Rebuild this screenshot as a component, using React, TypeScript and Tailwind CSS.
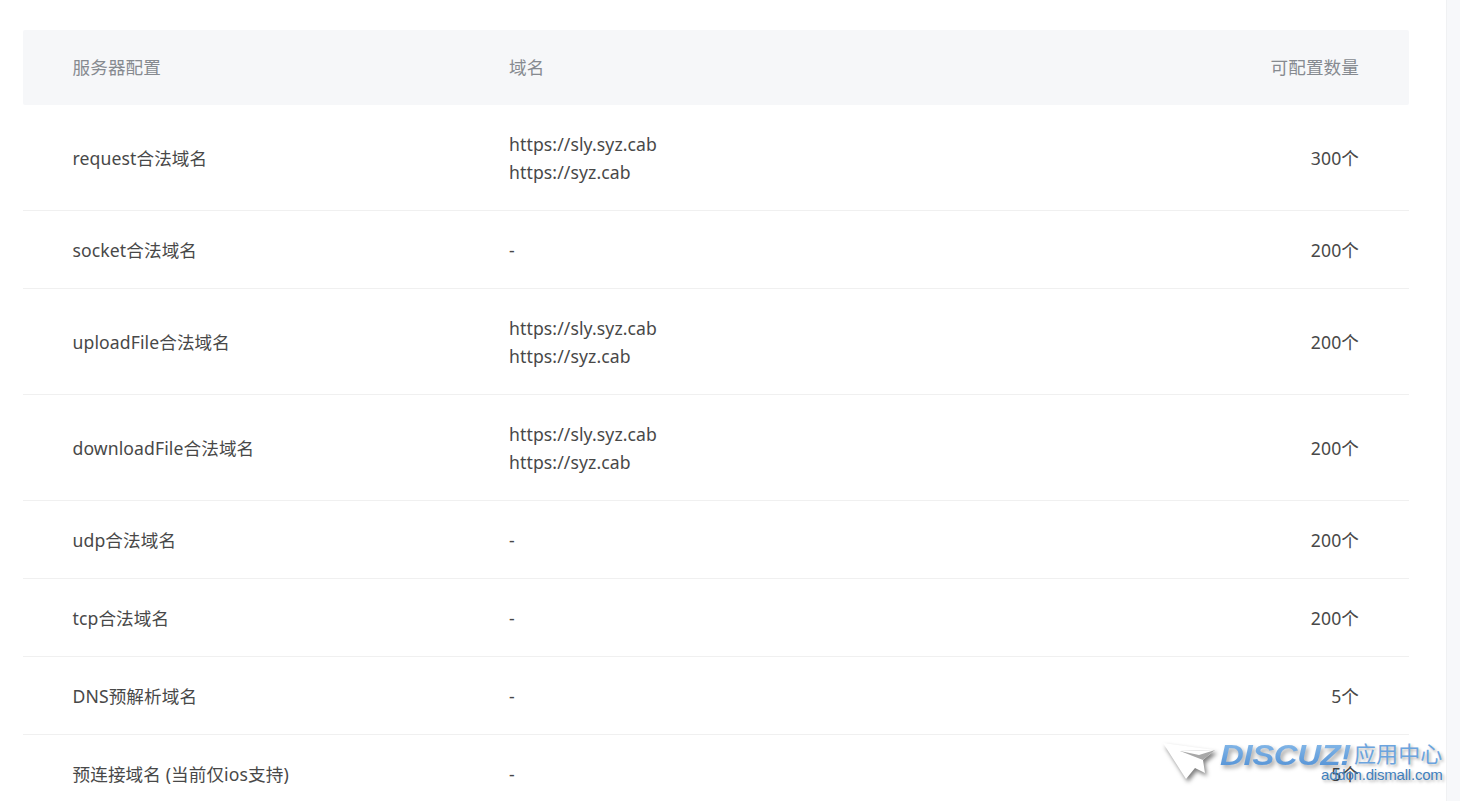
const rows = [
  { name: "request合法域名", domains: ["https://sly.syz.cab", "https://syz.cab"], count: "300个" },
  { name: "socket合法域名", domains: [], count: "200个" },
  { name: "uploadFile合法域名", domains: ["https://sly.syz.cab", "https://syz.cab"], count: "200个" },
  { name: "downloadFile合法域名", domains: ["https://sly.syz.cab", "https://syz.cab"], count: "200个" },
  { name: "udp合法域名", domains: [], count: "200个" },
  { name: "tcp合法域名", domains: [], count: "200个" },
  { name: "DNS预解析域名", domains: [], count: "5个" },
  { name: "预连接域名 (当前仅ios支持)", domains: [], count: "5个" },
];

const Watermark = () => {
  return (
    <div className="absolute left-[1163px] top-[738px] w-[284px] h-[50px] pointer-events-none">
      <svg className="absolute left-0 top-[4px] overflow-visible drop-shadow-[2px_3px_2px_rgba(0,0,0,0.5)]" width="54" height="42" viewBox="0 0 54 42">
        <path d="M0 1 L52 8 L40 18 L42 31 L32 26 L23 37 Z" fill="#ffffff" />
        <path d="M17 9 L52 8 L40 18 Z" fill="#a8a8a8" />
        <path d="M17 9 L52 8 L36 13 Z" fill="#ffffff" />
      </svg>
      <span className="absolute left-[57px] top-[-1px] inline-block origin-left scale-x-[1.14] font-['Liberation_Sans',sans-serif] italic font-bold text-[29px] leading-[36px] tracking-[-0.4px] bg-gradient-to-b from-[#8fc0ec] to-[#4a8bd2] bg-clip-text text-transparent drop-shadow-[2px_3px_2px_rgba(0,0,0,0.35)]">
        DISCUZ!
      </span>
      <span className="absolute left-[191px] top-[0px] font-['Noto_Sans_CJK_SC',sans-serif] text-[22px] leading-[28px] text-[#6ba4de] [text-shadow:2px_2px_3px_rgba(0,0,0,0.3)]">
        应用中心
      </span>
      <span className="absolute left-[158px] top-[26px] font-['Liberation_Sans',sans-serif] text-[15px] leading-[22px] tracking-[-0.2px] text-[#3f7fbd] [text-shadow:2px_2px_3px_rgba(0,0,0,0.3)]">
        addon.dismall.com
      </span>
    </div>
  );
};

const App = () => {
  return (
    <div className="relative flex h-[801px] overflow-hidden bg-white font-['Noto_Sans','Noto_Sans_CJK_SC',sans-serif] text-[17.6px] tracking-[0.1px] text-[#484848]">
      <div className="flex-1 pl-[23px] pr-[37px] pt-[30px]">
        <div className="grid grid-cols-[436.5px_1fr_auto] items-center h-[75px] pl-[49.5px] pr-[50px] rounded-[2px] bg-[#f6f7f9] text-[#868a90]">
          <div>服务器配置</div>
          <div>域名</div>
          <div className="text-right">可配置数量</div>
        </div>
        {rows.map((row) => (
          <div
            key={row.name}
            className={`grid grid-cols-[436.5px_1fr_auto] items-center border-b border-[#f0f0f0] pl-[49.5px] pr-[50px] ${
              row.domains.length ? "h-[106px]" : "h-[78px]"
            }`}
          >
            <div className="pt-[2px]">{row.name}</div>
            {row.domains.length ? (
              <div className="leading-[28px]">
                {row.domains.map((d) => (
                  <div key={d}>{d}</div>
                ))}
              </div>
            ) : (
              <div className="pt-[2px]">-</div>
            )}
            <div className="pt-[2px] text-right">{row.count}</div>
          </div>
        ))}
      </div>
      <div className="w-[14px] bg-[#f7f8fa] border-l border-[#f0f1f3]" />
      <Watermark />
    </div>
  );
};

export default App;
